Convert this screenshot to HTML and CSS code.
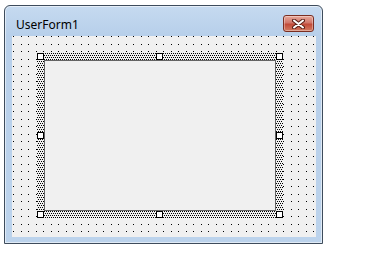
FILE: index.html
```html
<!DOCTYPE html>
<html lang="en">
<head>
  <meta charset="UTF-8" />
  <title>UserForm1</title>
  <link rel="stylesheet" href="styles.css">
</head>
<body>
  <div class="window">
    <div class="titlebar">
      <span class="title">UserForm1</span>
      <button class="close" aria-label="Close">
        <svg width="13" height="10" viewBox="0 0 13 10">
          <path d="M2 1.5 L11 8.5 M11 1.5 L2 8.5" stroke="#5a1f16" stroke-width="4" stroke-linecap="round" />
          <path d="M2 1.5 L11 8.5 M11 1.5 L2 8.5" stroke="#fff" stroke-width="2" stroke-linecap="round" />
        </svg>
      </button>
    </div>

    <!-- design surface with the grid -->
    <div class="client">
      <div class="selection">
        <div class="control"></div>
        <span class="handle tl"></span>
        <span class="handle tc"></span>
        <span class="handle tr"></span>
        <span class="handle ml"></span>
        <span class="handle mr"></span>
        <span class="handle bl"></span>
        <span class="handle bc"></span>
        <span class="handle br"></span>
      </div>
    </div>
  </div>
</body>
</html>
```

FILE: styles.css
```css
body {
  margin: 0;
  background: #fff;
  font-family: "Noto Sans", "Open Sans", sans-serif;
}
.window {
  margin: 5px 0 0 4px;
  width: 319px;
  height: 239px;
  box-sizing: border-box;
  border: 1px solid #3e4c5c;
  border-radius: 6px 6px 0 0;
  background: linear-gradient(#c6daf0, #b7cfea 30px, #bcd3ec);
  box-shadow: inset 0 0 0 1px rgba(255, 255, 255, 0.55);
  display: flex;
  flex-direction: column;
}
.titlebar {
  height: 30px;
  box-sizing: border-box;
  padding: 9px 8px 0 11px;
  display: flex;
  justify-content: space-between;
  align-items: flex-start;
}
.title {
  font-size: 12px;
  line-height: 17px;
  margin-top: 1px;
  color: #000;
}
.close {
  width: 31px;
  height: 17px;
  padding: 0;
  border: 1px solid #7a2e22;
  border-radius: 3px;
  background: linear-gradient(#e9a99a, #d0766a 45%, #c24a38 55%, #d27b62);
  box-shadow: inset 0 0 0 1px rgba(255, 255, 255, 0.35);
  display: flex;
  justify-content: center;
  align-items: center;
}
.client {
  margin-left: 7px;
  width: 304px;
  height: 201px;
  box-sizing: border-box;
  padding: 17px 0 0 25px;
  background-color: #f0f0f0;
  background-image:
    conic-gradient(from 0deg at 1px 1px, transparent 75%, #000 0),
    conic-gradient(from 0deg at 1px 1px, transparent 75%, #000 0),
    conic-gradient(from 0deg at 1px 1px, transparent 75%, #000 0),
    conic-gradient(from 0deg at 1px 1px, transparent 75%, #000 0);
  background-size: 15px 15px;
  background-position: 1px 0, 9px 0, 1px 8px, 9px 8px;
}
/* hatched border of the selected control */
.selection {
  position: relative;
  width: 246px;
  height: 165px;
  box-sizing: border-box;
  padding: 7px;
  background-color: #f0f0f0;
  background-image:
    conic-gradient(from 0deg at 1px 1px, transparent 75%, #000 0),
    conic-gradient(from 0deg at 1px 1px, transparent 75%, #000 0);
  background-size: 2px 4px;
  background-position: 0 0, 1px 2px;
}
.control {
  height: 100%;
  box-sizing: border-box;
  border: 1px solid #646464;
  background: #f0f0f0;
}
.handle {
  position: absolute;
  width: 7px;
  height: 7px;
  box-sizing: border-box;
  border: 1px solid #000;
  background: #fff;
}
.tl { left: 0; top: 0; }
.tc { left: 119px; top: 0; }
.tr { right: 0; top: 0; }
.ml { left: 0; top: 79px; }
.mr { right: 0; top: 79px; }
.bl { left: 0; bottom: 0; }
.bc { left: 119px; bottom: 0; }
.br { right: 0; bottom: 0; }
```
